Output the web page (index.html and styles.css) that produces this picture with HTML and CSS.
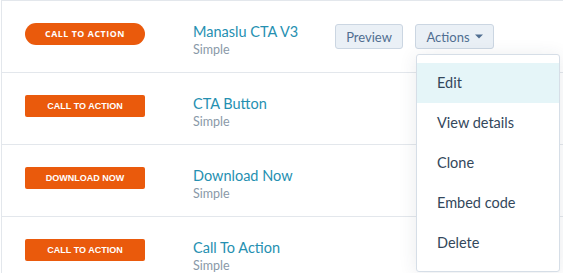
FILE: index.html
```html
<!DOCTYPE html>
<html>
<head>
<meta charset="utf-8">
<link rel="stylesheet" href="styles.css">
</head>
<body>
<div class="table">
  <div class="row">
    <div class="cta-cell"><span class="cta pill">CALL TO ACTION</span></div>
    <div class="name-cell">
      <div class="title">Manaslu CTA V3</div>
      <div class="subtitle">Simple</div>
    </div>
    <div class="actions">
      <button class="btn btn-preview">Preview</button>
      <div class="dd">
        <button class="btn btn-actions">Actions <svg class="caret" width="8" height="5" viewBox="0 0 8 5"><path d="M0 0.5h8L4 4.5z" fill="#506e91"/></svg></button>
        <ul class="menu">
          <li class="active">Edit</li>
          <li>View details</li>
          <li>Clone</li>
          <li>Embed code</li>
          <li>Delete</li>
        </ul>
      </div>
    </div>
  </div>
  <div class="row">
    <div class="cta-cell"><span class="cta rect">CALL TO ACTION</span></div>
    <div class="name-cell">
      <div class="title">CTA Button</div>
      <div class="subtitle">Simple</div>
    </div>
  </div>
  <div class="row">
    <div class="cta-cell"><span class="cta rect">DOWNLOAD NOW</span></div>
    <div class="name-cell">
      <div class="title">Download Now</div>
      <div class="subtitle">Simple</div>
    </div>
  </div>
  <div class="row">
    <div class="cta-cell"><span class="cta rect">CALL TO ACTION</span></div>
    <div class="name-cell">
      <div class="title">Call To Action</div>
      <div class="subtitle">Simple</div>
    </div>
  </div>
</div>
</body>
</html>
```
FILE: styles.css
```css
html, body {
  margin: 0;
  padding: 0;
  background: #fff;
  font-family: Lato, "Open Sans", sans-serif;
}
html {
  overflow: hidden;
}
body {
  padding-left: 1px;
}
.table {
  border-top: 1px solid #e3e7ec;
  border-left: 1px solid #e3e7ec;
}
.row {
  display: flex;
  align-items: flex-start;
  height: 71px;
  border-bottom: 1px solid #e3e7ec;
}
.cta-cell {
  width: 191px;
  flex: none;
  padding-top: 22px;
}
.cta {
  display: flex;
  align-items: center;
  justify-content: center;
  width: 120px;
  height: 22px;
  margin-left: 23px;
  background: #ea5a0c;
  color: #fff;
  font-weight: 700;
  box-sizing: border-box;
}
.pill {
  border-radius: 11px;
  font-family: "Open Sans", sans-serif;
  font-size: 8.8px;
  letter-spacing: 0.55px;
}
.rect {
  border-radius: 2px;
  font-family: "Liberation Sans", Arial, sans-serif;
  font-size: 9px;
}
.name-cell {
  width: 142px;
  flex: none;
  padding-top: 21.5px;
  font-family: Lato, sans-serif;
}
.title {
  font-size: 14.5px;
  line-height: 18px;
  color: #2590b1;
}
.subtitle {
  margin-top: 1px;
  font-size: 12.5px;
  line-height: 15px;
  color: #8a99a8;
}
.actions {
  display: flex;
  gap: 12px;
  padding-top: 23px;
}
.btn {
  height: 25px;
  box-sizing: border-box;
  padding: 0;
  background: #eaf0f6;
  border: 1px solid #cbd6e2;
  border-radius: 3px;
  color: #506e91;
  font-family: Lato, sans-serif;
  font-size: 13px;
  display: flex;
  align-items: center;
  justify-content: center;
  margin: 0;
}
.btn-preview {
  width: 68px;
}
.btn-actions {
  width: 79px;
  gap: 5px;
}
.caret {
  display: block;
  flex: none;
}
.dd {
  position: relative;
}
.menu {
  position: absolute;
  top: 30px;
  left: 1px;
  width: 144px;
  box-sizing: border-box;
  margin: 0;
  padding: 8px 0;
  list-style: none;
  background: #fff;
  border: 1px solid #d6dee7;
  border-radius: 3px;
  box-shadow: 0 2px 18px rgba(45, 62, 80, 0.10);
  z-index: 10;
}
.menu li {
  height: 40px;
  line-height: 40px;
  padding-left: 20px;
  font-size: 14.5px;
  color: #33475b;
}
.menu li.active {
  background: #e5f5f8;
}
```
